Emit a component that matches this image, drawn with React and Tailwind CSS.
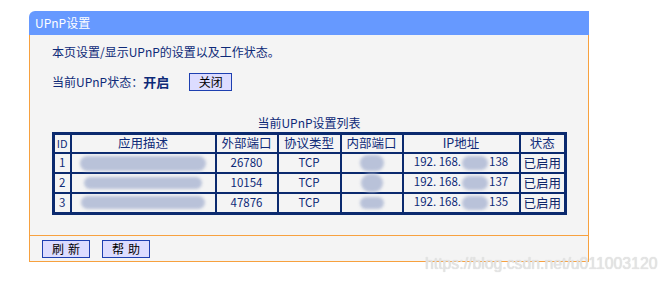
import React from "react";

const navy = "text-[#0e2a78]";

function Blob({ w, h, className = "" }) {
  return (
    <span
      className={`inline-block align-middle rounded-full bg-[#b9c2d9] blur-[1.5px] ${className}`}
      style={{ width: w, height: h }}
    />
  );
}

const rows = [
  { id: "1", ext: "26780", ip: "138", desc: [126, 15], inw: 24, inh: 16 },
  { id: "2", ext: "10154", ip: "137", desc: [118, 12], inw: 22, inh: 18 },
  { id: "3", ext: "47876", ip: "135", desc: [124, 13], inw: 24, inh: 12 },
];

export default function App() {
  return (
    <div
      className="w-[668px] h-[284px] bg-white relative overflow-hidden"
      style={{ fontFamily: '"Noto Sans CJK SC", "Liberation Sans", sans-serif' }}
    >
      <div className="ml-[29px] pt-[11px] w-[560px]">
        <div className="h-[24px] bg-[#6699ff] rounded-tl-[6px] flex items-center pl-[6px] text-white text-[12px] leading-none">
          UPnP设置
        </div>
        <div className="border-x border-[#f7a13f] bg-[#f4f4f4] h-[200px] pl-[22px]">
          <div className={`pt-[9px] text-[12px] leading-[16px] ${navy}`}>
            本页设置/显示UPnP的设置以及工作状态。
          </div>
          <div className={`mt-[12px] flex items-center text-[12px] ${navy}`}>
            <span>当前UPnP状态：</span>
            <span className="font-bold text-[13px]">开启</span>
            <button className="ml-[20px] w-[43px] h-[18px] border border-[#1d3fb0] bg-[#dcdcff] text-black text-[12px] leading-none flex items-center justify-center">
              关闭
            </button>
          </div>
          <div className={`mt-[23px] w-[514px] text-center text-[12px] leading-[16px] ${navy}`}>
            当前UPnP设置列表
          </div>
          <table className={`mt-[1px] w-[512px] table-fixed border-collapse border-[3px] border-[#0b2a6e] text-[11.5px] ${navy}`}>
            <colgroup>
              <col className="w-[17px]" />
              <col className="w-[145px]" />
              <col className="w-[62px]" />
              <col className="w-[63px]" />
              <col className="w-[62px]" />
              <col className="w-[117px]" />
              <col className="w-[46px]" />
            </colgroup>
            <thead>
              <tr className="h-[20px] text-[12.5px]">
                {["ID", "应用描述", "外部端口", "协议类型", "内部端口", "IP地址", "状态"].map((h) => (
                  <th key={h} className="border-2 border-[#0b2a6e] font-normal p-0 leading-none whitespace-nowrap">
                    {h === "ID" ? <span className="text-[11px]">ID</span> : h}
                  </th>
                ))}
              </tr>
            </thead>
            <tbody>
              {rows.map((r) => (
                <tr key={r.id} className="h-[20px]">
                  <td className="border-2 border-[#0b2a6e] text-center p-0 leading-none">{r.id}</td>
                  <td className="border-2 border-[#0b2a6e] text-center p-0 leading-none">
                    <Blob w={r.desc[0]} h={r.desc[1]} />
                  </td>
                  <td className="border-2 border-[#0b2a6e] text-center p-0 leading-none">{r.ext}</td>
                  <td className="border-2 border-[#0b2a6e] text-center p-0 leading-none">TCP</td>
                  <td className="border-2 border-[#0b2a6e] text-center p-0 leading-none">
                    <Blob w={r.inw} h={r.inh} className="rounded-[6px]" />
                  </td>
                  <td className="border-2 border-[#0b2a6e] text-center p-0 leading-none whitespace-nowrap">
                    <span>192. 168.</span>
                    <Blob w={26} h={14} className="mx-[1px]" />
                    <span>{r.ip}</span>
                  </td>
                  <td className="border-2 border-[#0b2a6e] text-center p-0 leading-none text-[12.5px] text-[#0a2368] whitespace-nowrap">已启用</td>
                </tr>
              ))}
            </tbody>
          </table>
        </div>
        <div className="border border-t border-[#f7a13f] bg-[#f4f4f4] h-[27px] flex items-center pl-[12px] gap-[12px]">
          <button className="w-[48px] h-[18px] border border-[#1d3fb0] bg-[#dcdcff] text-black text-[12px] leading-none flex items-center justify-center tracking-[4px] pl-[4px]">
            刷新
          </button>
          <button className="w-[48px] h-[18px] border border-[#1d3fb0] bg-[#dcdcff] text-black text-[12px] leading-none flex items-center justify-center tracking-[4px] pl-[4px]">
            帮助
          </button>
        </div>
      </div>
      <div
        className="absolute left-[425px] top-[256px] text-[15.8px] text-[#e4e4e4] leading-none whitespace-nowrap"
        style={{ fontFamily: '"Liberation Sans", Arial, sans-serif', textShadow: "0 0 1px #d0d0d0" }}
      >
        https://blog.csdn.net/u011003120
      </div>
    </div>
  );
}
